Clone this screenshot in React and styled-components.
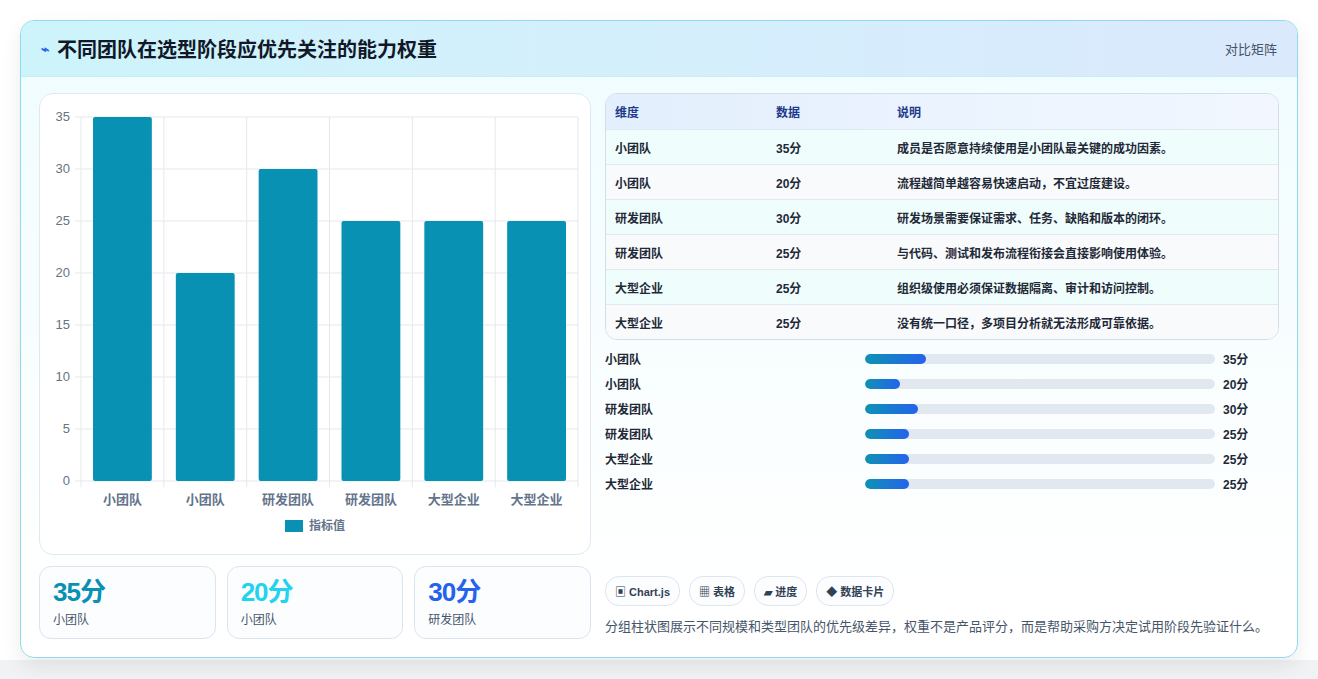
import React from "react";
import styled, { createGlobalStyle } from "styled-components";

const G = createGlobalStyle`
  body{margin:0;background:#f3f4f6;font-family:"Liberation Sans","Noto Sans CJK SC",sans-serif;}
`;
const Page = styled.div`padding:20px 20px 21px 20px;background:#fff;height:679px;box-sizing:border-box;
  background:linear-gradient(#fff 0,#fff 660px,#f1f2f4 660px);`;
const Card = styled.div`border:1px solid #8ddcec;border-radius:14px;overflow:hidden;height:638px;box-sizing:border-box;
  background:linear-gradient(180deg,#effcfe 0%,#ffffff 90%);box-shadow:0 8px 20px rgba(0,0,0,.08);display:flex;flex-direction:column;`;
const Header = styled.div`height:55px;flex:none;display:flex;align-items:center;justify-content:space-between;padding:0 20px;
  background:linear-gradient(90deg,#cdf4fb,#dbe9fd);border-bottom:1px solid #c9eef6;`;
const Title = styled.h1`margin:0;font-size:20px;font-weight:700;color:#111827;display:flex;align-items:center;gap:8px;
  span{color:#2563eb;font-size:14px;}`;
const HLink = styled.div`font-size:13px;color:#475569;`;
const Body = styled.div`flex:1;display:grid;grid-template-columns:552px 1fr;gap:14px;padding:16px 18px 18px 18px;`;
const Col = styled.div`display:flex;flex-direction:column;gap:11px;min-width:0;`;
const ChartBox = styled.div`height:462px;background:#fff;border:1px solid #e2e8f0;border-radius:14px;box-sizing:border-box;`;
const Stats = styled.div`display:grid;grid-template-columns:repeat(3,1fr);gap:11px;`;
const Stat = styled.div`height:73px;border:1px solid #dbe4ef;border-radius:12px;background:#fbfdff;box-sizing:border-box;padding:9px 13px;`;
const StatV = styled.div`font-size:26px;font-weight:700;color:${p=>p.c};letter-spacing:-1px;line-height:32px;`;
const StatL = styled.div`font-size:12px;color:#475569;margin-top:2px;`;
const Table = styled.div`border:1px solid #d5dde8;border-radius:12px;overflow:hidden;`;
const Row = styled.div`display:grid;grid-template-columns:161px 121px 1fr;height:35px;align-items:center;padding:0 9px;font-size:12px;
  font-weight:700;color:${p=>p.h?"#1e3a8a":"#1f2937"};background:${p=>p.h?"linear-gradient(90deg,#e3effd,#f2f7ff)":p.odd?"#f0fdfd":"#f8fafc"};
  border-top:${p=>p.h?"none":"1px solid #e2e8f0"};box-sizing:border-box;`;
const Bars = styled.div`display:flex;flex-direction:column;margin-top:6px;`;
const BarRow = styled.div`display:grid;grid-template-columns:252px 350px 1fr;column-gap:8px;align-items:center;height:25px;font-size:12px;font-weight:700;color:#1f2937;`;
const Track = styled.div`height:10px;border-radius:5px;background:#e2e8f0;overflow:hidden;`;
const Fill = styled.div`height:100%;border-radius:5px;background:linear-gradient(90deg,#0e92b4,#2563eb);`;
const Spacer = styled.div`flex:1;`;
const Chips = styled.div`display:flex;gap:9px;`;
const Chip = styled.div`height:28px;padding:0 9px;border:1px solid #dfe5ee;border-radius:14px;font-size:11px;font-weight:700;color:#334155;
  display:flex;align-items:center;background:#fbfdff;`;
const Desc = styled.p`margin:10px 0 4px;font-size:13px;color:#475569;`;

const cats=["小团队","小团队","研发团队","研发团队","大型企业","大型企业"];
const vals=[35,20,30,25,25,25];
const desc=["成员是否愿意持续使用是小团队最关键的成功因素。","流程越简单越容易快速启动，不宜过度建设。","研发场景需要保证需求、任务、缺陷和版本的闭环。","与代码、测试和发布流程衔接会直接影响使用体验。","组织级使用必须保证数据隔离、审计和访问控制。","没有统一口径，多项目分析就无法形成可靠依据。"];

function Chart(){
  const x0=41,x1=538,top=23,bot=387,cw=(x1-x0)/6;
  const y=v=>bot-(v/35)*(bot-top);
  return <svg width="551" height="460" style={{display:"block"}}>
    {[0,5,10,15,20,25,30,35].map(v=><g key={v}>
      <line x1={x0-6} x2={x1} y1={y(v)} y2={y(v)} stroke="#e5e7eb"/>
      <text x={x0-11} y={y(v)+4} fontSize="13" fill="#6b7280" textAnchor="end" fontFamily="Liberation Sans">{v}</text></g>)}
    {[0,1,2,3,4,5,6].map(i=><line key={i} x1={x0+i*cw} x2={x0+i*cw} y1={top} y2={bot+6} stroke="#e5e7eb"/>)}
    {vals.map((v,i)=><g key={i}>
      <rect x={x0+i*cw+12} width={cw-24} y={y(v)} height={bot-y(v)} fill="#0891b2" rx="2"/>
      <text x={x0+i*cw+cw/2} y={410} fontSize="13" fontWeight="700" fill="#64748b" textAnchor="middle" fontFamily="Liberation Sans,Noto Sans CJK SC">{cats[i]}</text></g>)}
    <rect x="245" y="426" width="18" height="12" fill="#0891b2"/>
    <text x="269" y="436" fontSize="12" fontWeight="700" fill="#64748b" fontFamily="Liberation Sans,Noto Sans CJK SC">指标值</text>
  </svg>;
}

export default function App(){
  return <><G/><Page><Card>
    <Header><Title><span>⌁</span>不同团队在选型阶段应优先关注的能力权重</Title><HLink>对比矩阵</HLink></Header>
    <Body>
      <Col>
        <ChartBox><Chart/></ChartBox>
        <Stats>
          <Stat><StatV c="#0891b2">35分</StatV><StatL>小团队</StatL></Stat>
          <Stat><StatV c="#22d3ee">20分</StatV><StatL>小团队</StatL></Stat>
          <Stat><StatV c="#2563eb">30分</StatV><StatL>研发团队</StatL></Stat>
        </Stats>
      </Col>
      <Col style={{gap:0}}>
        <Table>
          <Row h><span>维度</span><span>数据</span><span>说明</span></Row>
          {vals.map((v,i)=><Row key={i} odd={i%2===0}><span>{cats[i]}</span><span>{v}分</span><span>{desc[i]}</span></Row>)}
        </Table>
        <Bars>{vals.map((v,i)=><BarRow key={i}><span>{cats[i]}</span><Track><Fill style={{width:`${v/2}%`}}/></Track><span>{v}分</span></BarRow>)}</Bars>
        <Spacer/>
        <Chips><Chip>▣ Chart.js</Chip><Chip>▦ 表格</Chip><Chip>▰ 进度</Chip><Chip>◆ 数据卡片</Chip></Chips>
        <Desc>分组柱状图展示不同规模和类型团队的优先级差异，权重不是产品评分，而是帮助采购方决定试用阶段先验证什么。</Desc>
      </Col>
    </Body>
  </Card></Page></>;
}
